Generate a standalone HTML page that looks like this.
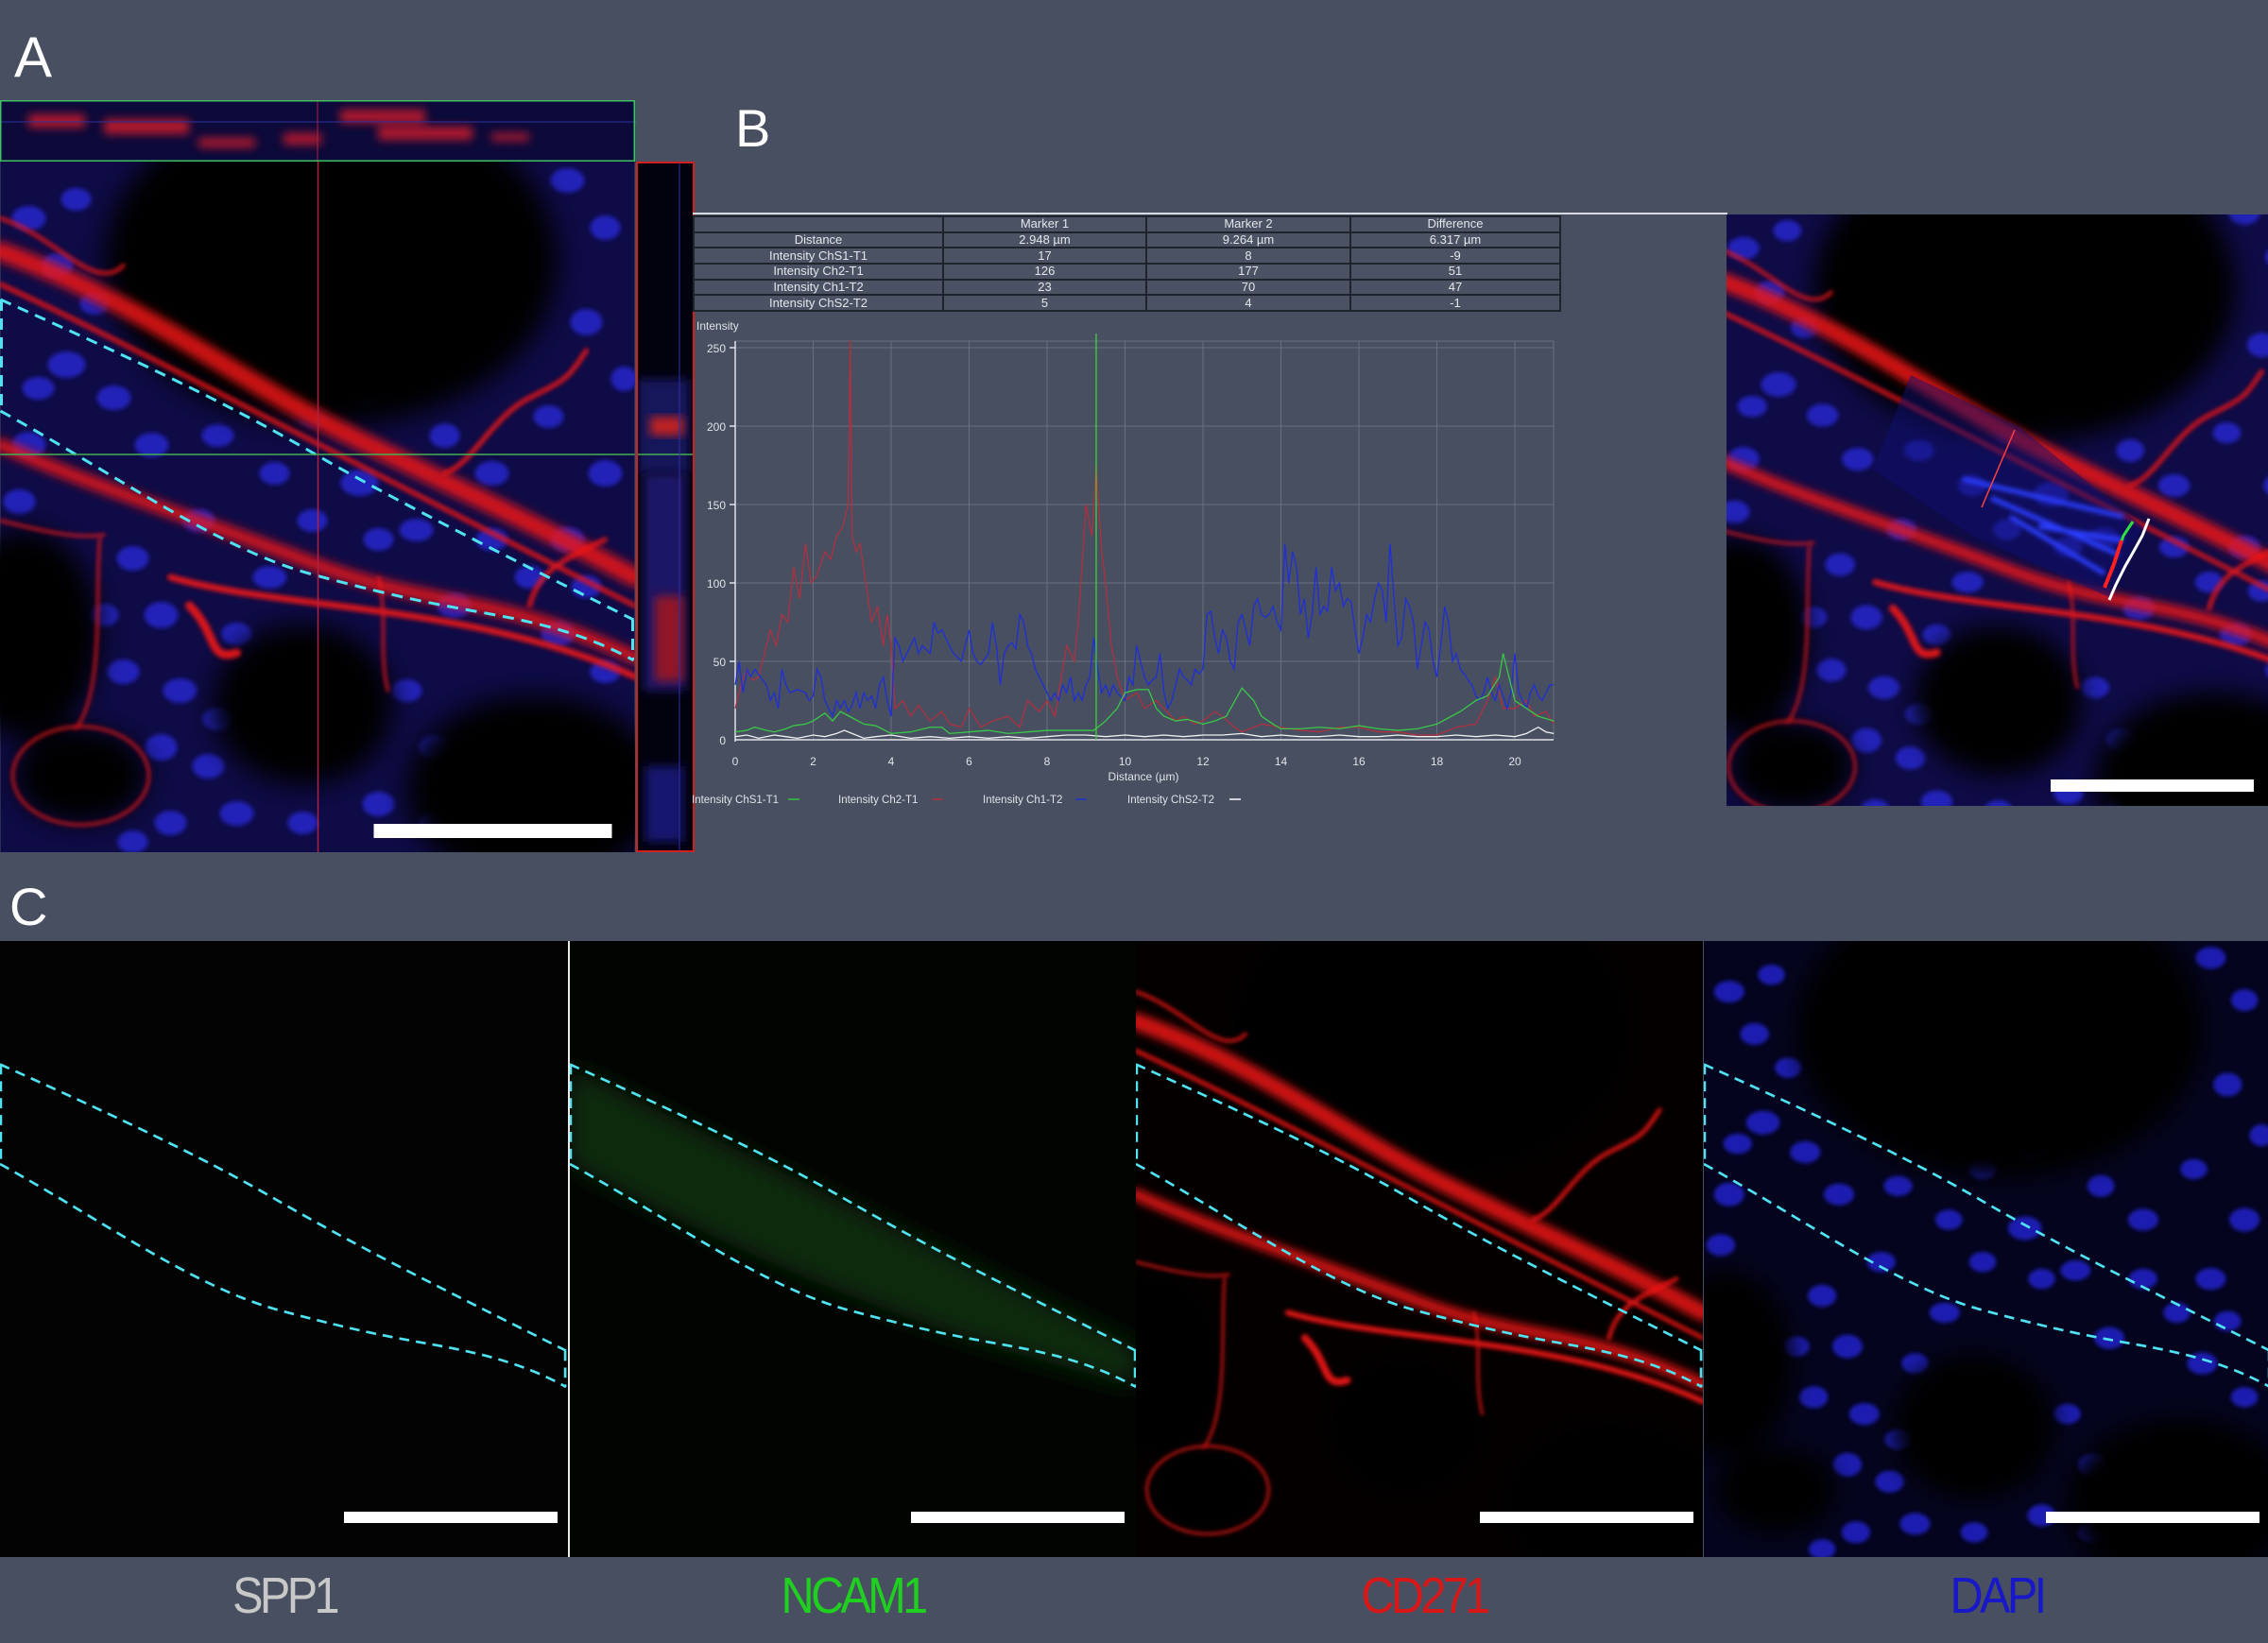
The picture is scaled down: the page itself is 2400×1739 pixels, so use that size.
<!DOCTYPE html>
<html><head><meta charset="utf-8"><style>
html,body{margin:0;padding:0}
body{width:2400px;height:1739px;background:#474f60;position:relative;overflow:hidden;font-family:"Liberation Sans",sans-serif}
.abs{position:absolute}
.lbl{position:absolute;color:#fff;font-size:60px;line-height:1}
.bl{position:absolute;top:1662px;font-size:54px;letter-spacing:-4px;transform:scaleX(0.9);line-height:1}
table{border-collapse:collapse;table-layout:fixed;position:absolute;left:733px;top:228px;width:917px;font-size:13px;color:#e4e6ea}
td{border:2px solid #1f232c;height:14.7px;padding:0;text-align:center;background:#4a5264;line-height:14px;white-space:nowrap}
</style></head><body>
<svg width="0" height="0" style="position:absolute">
<defs>
<filter id="b2" x="-20%" y="-20%" width="140%" height="140%"><feGaussianBlur stdDeviation="2.5"/></filter>
<filter id="b4" x="-20%" y="-20%" width="140%" height="140%"><feGaussianBlur stdDeviation="5"/></filter>
<filter id="b10" x="-30%" y="-30%" width="160%" height="160%"><feGaussianBlur stdDeviation="14"/></filter>
<g id="nuc" filter="url(#b2)">
<ellipse cx="30" cy="60" rx="18" ry="13"/><ellipse cx="80" cy="40" rx="16" ry="12"/><ellipse cx="60" cy="110" rx="17" ry="13"/><ellipse cx="100" cy="150" rx="16" ry="12"/>
<ellipse cx="70" cy="215" rx="20" ry="14"/><ellipse cx="120" cy="250" rx="18" ry="13"/><ellipse cx="30" cy="300" rx="18" ry="14"/><ellipse cx="20" cy="360" rx="17" ry="13"/>
<ellipse cx="230" cy="290" rx="17" ry="12"/><ellipse cx="290" cy="330" rx="16" ry="12"/><ellipse cx="380" cy="340" rx="20" ry="14"/><ellipse cx="440" cy="390" rx="18" ry="12"/>
<ellipse cx="385" cy="245" rx="18" ry="13"/><ellipse cx="470" cy="290" rx="16" ry="13"/><ellipse cx="520" cy="330" rx="18" ry="13"/><ellipse cx="580" cy="270" rx="16" ry="12"/>
<ellipse cx="620" cy="170" rx="17" ry="14"/><ellipse cx="640" cy="70" rx="16" ry="13"/><ellipse cx="600" cy="20" rx="18" ry="13"/><ellipse cx="640" cy="330" rx="18" ry="14"/>
<ellipse cx="600" cy="400" rx="18" ry="13"/><ellipse cx="560" cy="440" rx="16" ry="12"/><ellipse cx="480" cy="470" rx="18" ry="13"/><ellipse cx="140" cy="420" rx="17" ry="13"/>
<ellipse cx="170" cy="480" rx="18" ry="14"/><ellipse cx="130" cy="540" rx="17" ry="13"/><ellipse cx="190" cy="560" rx="18" ry="13"/><ellipse cx="170" cy="620" rx="17" ry="14"/>
<ellipse cx="180" cy="700" rx="17" ry="13"/><ellipse cx="250" cy="690" rx="18" ry="13"/><ellipse cx="320" cy="700" rx="16" ry="12"/><ellipse cx="400" cy="680" rx="17" ry="13"/>
<ellipse cx="430" cy="560" rx="16" ry="12"/><ellipse cx="460" cy="620" rx="17" ry="13"/><ellipse cx="250" cy="500" rx="16" ry="12"/><ellipse cx="285" cy="440" rx="18" ry="12"/>
<ellipse cx="640" cy="540" rx="16" ry="12"/><ellipse cx="590" cy="500" rx="18" ry="13"/><ellipse cx="330" cy="380" rx="16" ry="12"/><ellipse cx="210" cy="380" rx="17" ry="12"/>
<ellipse cx="40" cy="240" rx="17" ry="12"/><ellipse cx="160" cy="300" rx="18" ry="13"/><ellipse cx="330" cy="270" rx="16" ry="12"/><ellipse cx="520" cy="400" rx="17" ry="12"/>
<ellipse cx="220" cy="640" rx="17" ry="13"/><ellipse cx="140" cy="720" rx="16" ry="12"/><ellipse cx="460" cy="700" rx="17" ry="12"/><ellipse cx="660" cy="230" rx="14" ry="13"/>
<ellipse cx="620" cy="450" rx="16" ry="12"/><ellipse cx="230" cy="590" rx="16" ry="12"/><ellipse cx="110" cy="480" rx="15" ry="12"/><ellipse cx="400" cy="400" rx="16" ry="12"/>
</g>
<g id="holes" fill="#000" filter="url(#b10)">
<ellipse cx="350" cy="105" rx="240" ry="175"/>
<ellipse cx="25" cy="500" rx="80" ry="110"/>
<ellipse cx="85" cy="650" rx="70" ry="50"/>
<ellipse cx="320" cy="575" rx="95" ry="85"/>
<ellipse cx="565" cy="665" rx="135" ry="100"/>
</g>
<g id="red" fill="none" stroke="#f01818" stroke-linecap="round">
<g filter="url(#b4)" opacity=".85">
<path d="M0,95 C150,150 250,230 360,285 S560,380 671,440" stroke-width="20"/>
<path d="M0,300 C100,345 200,375 330,425 S520,455 671,525" stroke-width="14"/>
</g>
<g filter="url(#b2)" opacity=".9">
<path d="M0,130 C120,185 300,282 671,470" stroke-width="5"/>
<path d="M180,440 C300,475 500,468 671,545" stroke-width="7"/>
<path d="M0,60 C60,80 100,140 130,110" stroke-width="4"/>
<ellipse cx="85" cy="650" rx="72" ry="52" stroke-width="3"/>
<path d="M105,400 C100,460 110,560 80,600" stroke-width="3"/>
<path d="M200,470 C230,500 220,530 250,520" stroke-width="9"/>
<path d="M470,330 C500,320 520,270 560,250 S600,230 620,200" stroke-width="5"/>
<path d="M0,380 C40,390 80,400 110,395" stroke-width="3"/>
<path d="M560,470 C570,430 600,420 640,400" stroke-width="5"/>
<path d="M400,440 C410,480 400,520 410,560" stroke-width="3"/>
</g>
</g>
<g id="cyan" fill="none" stroke="#4fe3f2" stroke-width="3" stroke-dasharray="12 8">
<path d="M0,146 C120,200 230,250 330,308 S560,430 670,485"/>
<path d="M0,264 C120,330 230,410 330,437 S470,470 519,479 S620,500 670,528"/>
<path d="M1,146 L1,264 M669,485 L669,528"/>
</g>
</defs>
</svg>

<div class="lbl" style="left:15px;top:31px">A</div>
<div class="lbl" style="left:778px;top:108px;font-size:56px">B</div>
<div class="lbl" style="left:10px;top:932px;font-size:56px">C</div>

<svg class="abs" style="left:0;top:106px" width="673" height="66">
<rect width="673" height="66" fill="#0b0a3a"/>
<g fill="#e01a2a" filter="url(#b4)" opacity=".8">
<rect x="30" y="15" width="60" height="14"/><rect x="110" y="20" width="90" height="16"/><rect x="210" y="40" width="60" height="10"/>
<rect x="360" y="10" width="90" height="14"/><rect x="400" y="28" width="100" height="14"/><rect x="520" y="35" width="40" height="8"/><rect x="300" y="35" width="40" height="12"/>
</g>
<rect x="0" y="22" width="673" height="2" fill="#3030a0" opacity=".5"/>
<line x1="336" y1="0" x2="336" y2="66" stroke="#b02040" stroke-width="1"/>
<rect x="0.5" y="0.5" width="671" height="64" fill="none" stroke="#40c060" stroke-width="2"/>
</svg>
<svg class="abs" style="left:0;top:171px" width="672" height="731" viewBox="0 0 671 731">
<rect width="671" height="731" fill="#0e0b46"/>
<use href="#nuc" fill="#2222b8"/>
<use href="#holes"/>
<use href="#red"/>
<use href="#cyan"/>
<line x1="336" y1="0" x2="336" y2="731" stroke="#b02040" stroke-width="1.5"/>
<line x1="0" y1="310" x2="671" y2="310" stroke="#40b050" stroke-width="1.5"/>
<rect x="395" y="701" width="252" height="15" fill="#fff"/>
</svg>
<svg class="abs" style="left:673px;top:171px" width="62" height="731">
<rect width="62" height="731" fill="#02020e"/>
<rect x="2" y="230" width="55" height="100" fill="#14145a" filter="url(#b4)"/>
<rect x="8" y="330" width="45" height="230" fill="#1a1866" filter="url(#b4)"/>
<rect x="15" y="270" width="35" height="20" fill="#c02020" filter="url(#b4)"/>
<rect x="20" y="460" width="30" height="90" fill="#901828" filter="url(#b4)"/>
<rect x="10" y="640" width="40" height="80" fill="#161670" filter="url(#b4)"/>
<line x1="0" y1="310" x2="62" y2="310" stroke="#40b050" stroke-width="1.5"/>
<line x1="46" y1="0" x2="46" y2="731" stroke="#3030a0" stroke-width="1"/>
<rect x="1" y="1" width="60" height="729" fill="none" stroke="#d02020" stroke-width="2"/>
</svg>

<div class="abs" style="left:733px;top:225px;width:1095px;height:2px;background:#d8dbe2"></div>
<table>
<colgroup><col style="width:264px"><col style="width:215px"><col style="width:216px"><col style="width:222px"></colgroup>
<tr><td></td><td>Marker 1</td><td>Marker 2</td><td>Difference</td></tr>
<tr><td>Distance</td><td>2.948 µm</td><td>9.264 µm</td><td>6.317 µm</td></tr>
<tr><td>Intensity ChS1-T1</td><td>17</td><td>8</td><td>-9</td></tr>
<tr><td>Intensity Ch2-T1</td><td>126</td><td>177</td><td>51</td></tr>
<tr><td>Intensity Ch1-T2</td><td>23</td><td>70</td><td>47</td></tr>
<tr><td>Intensity ChS2-T2</td><td>5</td><td>4</td><td>-1</td></tr>
</table>

<svg class="abs" style="left:730px;top:330px" width="930" height="540" font-family="Liberation Sans, sans-serif" font-size="12" fill="#e0e2e8">
<text x="7" y="19">Intensity</text>
<g stroke="#68707f" stroke-width="1">
<line x1="48" y1="31" x2="914" y2="31"/>
<line x1="48" y1="38" x2="914" y2="38"/><line x1="48" y1="121" x2="914" y2="121"/><line x1="48" y1="204" x2="914" y2="204"/>
<line x1="48" y1="287" x2="914" y2="287"/><line x1="48" y1="370" x2="914" y2="370"/>
<line x1="130.5" y1="31" x2="130.5" y2="453"/><line x1="213" y1="31" x2="213" y2="453"/><line x1="295.5" y1="31" x2="295.5" y2="453"/>
<line x1="378" y1="31" x2="378" y2="453"/><line x1="460.5" y1="31" x2="460.5" y2="453"/><line x1="543" y1="31" x2="543" y2="453"/>
<line x1="625.5" y1="31" x2="625.5" y2="453"/><line x1="708" y1="31" x2="708" y2="453"/><line x1="790.5" y1="31" x2="790.5" y2="453"/>
<line x1="873" y1="31" x2="873" y2="453"/><line x1="914" y1="31" x2="914" y2="453"/>
</g>
<g stroke="#e0e2e8" stroke-width="1.5"><line x1="48" y1="31" x2="48" y2="455"/><line x1="48" y1="453" x2="914" y2="453"/>
<line x1="42" y1="38" x2="48" y2="38"/><line x1="42" y1="121" x2="48" y2="121"/><line x1="42" y1="204" x2="48" y2="204"/><line x1="42" y1="287" x2="48" y2="287"/><line x1="42" y1="370" x2="48" y2="370"/></g>
<g text-anchor="end"><text x="38" y="43">250</text><text x="38" y="126">200</text><text x="38" y="209">150</text><text x="38" y="292">100</text><text x="38" y="375">50</text><text x="38" y="458">0</text></g>
<g text-anchor="middle"><text x="48" y="480">0</text><text x="130.5" y="480">2</text><text x="213" y="480">4</text><text x="295.5" y="480">6</text><text x="378" y="480">8</text><text x="460.5" y="480">10</text><text x="543" y="480">12</text><text x="625.5" y="480">14</text><text x="708" y="480">16</text><text x="790.5" y="480">18</text><text x="873" y="480">20</text>
<text x="480" y="496">Distance (µm)</text></g>
<g font-size="11.5"><text x="2" y="520">Intensity ChS1-T1</text><text x="157" y="520">Intensity Ch2-T1</text><text x="310" y="520">Intensity Ch1-T2</text><text x="463" y="520">Intensity ChS2-T2</text></g>
<line x1="104" y1="516" x2="116" y2="516" stroke="#30c040" stroke-width="1.5"/>
<line x1="256" y1="516" x2="268" y2="516" stroke="#b03040" stroke-width="1.5"/>
<line x1="408" y1="516" x2="420" y2="516" stroke="#2030d0" stroke-width="1.5"/>
<line x1="571" y1="516" x2="583" y2="516" stroke="#fff" stroke-width="1.5"/>
<g transform="translate(48,453) scale(41.25,-1.66)" fill="none" stroke-width="1.3">
<polyline vector-effect="non-scaling-stroke" stroke="#b03040" points="0,20 0.15,35 0.3,45 0.45,38 0.6,40 0.75,55 0.9,70 1.05,60 1.2,80 1.35,75 1.5,110 1.65,90 1.8,125 1.95,100 2.1,105 2.3,120 2.45,115 2.6,130 2.75,135 2.9,150 2.95,255 3,130 3.1,120 3.2,125 3.35,100 3.5,75 3.65,85 3.8,60 3.9,80 4,60 4.1,20 4.3,25 4.5,15 4.7,22 5,12 5.3,18 5.5,10 5.8,8 6,20 6.3,8 6.6,12 7,15 7.3,8 7.5,25 7.8,18 8,25 8.2,15 8.5,60 8.7,50 8.8,75 9,150 9.15,130 9.26,175 9.4,120 9.5,100 9.65,60 9.8,40 10,25 10.3,30 10.5,20 10.8,25 11,20 11.3,12 11.5,15 11.8,10 12,12 12.3,18 12.5,15 12.8,8 13,5 13.5,10 14,8 14.5,6 15,5 15.5,8 16,8 16.5,5 17,5 17.5,3 18,3 18.5,8 19,10 19.3,25 19.5,40 19.7,20 20,20 20.3,25 20.5,15 20.8,18 21,10"/>
<polyline vector-effect="non-scaling-stroke" stroke="#1f2fd8" points="0,35 0.1,50 0.2,30 0.3,45 0.4,40 0.5,45 0.65,40 0.8,35 0.9,25 1,30 1.1,20 1.2,45 1.3,35 1.4,30 1.6,32 1.8,30 1.9,25 2,28 2.1,45 2.2,40 2.3,25 2.4,20 2.5,15 2.6,25 2.7,20 2.8,25 2.9,18 3,22 3.1,30 3.2,20 3.3,30 3.4,25 3.5,28 3.6,20 3.7,35 3.8,40 3.9,25 4,15 4.1,65 4.2,60 4.3,50 4.4,55 4.6,65 4.7,55 4.8,60 5,55 5.1,75 5.2,68 5.3,70 5.5,60 5.6,55 5.8,50 5.9,60 6,70 6.1,55 6.2,50 6.3,48 6.5,55 6.6,75 6.7,60 6.8,35 6.9,55 7,60 7.1,62 7.2,58 7.3,80 7.4,75 7.5,60 7.6,55 7.7,45 7.8,40 7.9,35 8,30 8.1,25 8.2,30 8.3,25 8.4,35 8.5,30 8.6,40 8.7,25 8.8,30 8.9,25 9,35 9.1,40 9.2,65 9.3,45 9.4,30 9.5,35 9.6,28 9.7,35 9.8,30 10,25 10.1,40 10.2,35 10.3,60 10.4,50 10.5,40 10.6,35 10.7,38 10.8,40 10.9,55 11,30 11.1,20 11.2,25 11.4,45 11.5,40 11.6,38 11.7,35 11.8,45 11.9,42 12,45 12.1,80 12.2,82 12.3,65 12.4,55 12.5,70 12.6,65 12.7,50 12.8,45 12.9,75 13,80 13.1,70 13.2,60 13.3,85 13.4,90 13.5,80 13.6,78 13.7,80 13.8,85 13.9,75 14,70 14.1,125 14.2,100 14.3,120 14.4,110 14.5,80 14.6,90 14.7,65 14.8,80 14.9,110 15,80 15.1,85 15.2,82 15.3,110 15.4,95 15.5,100 15.6,85 15.7,90 15.8,88 15.9,70 16,55 16.1,65 16.2,80 16.3,75 16.4,90 16.5,100 16.6,95 16.7,75 16.8,125 16.9,90 17,60 17.1,65 17.2,90 17.3,85 17.4,75 17.5,45 17.6,60 17.7,75 17.8,70 17.9,50 18,40 18.1,60 18.2,85 18.3,75 18.4,50 18.5,55 18.6,45 18.7,42 18.8,38 18.9,35 19,28 19.1,25 19.2,30 19.3,40 19.4,30 19.5,25 19.6,35 19.7,28 19.8,20 19.9,30 20,55 20.1,30 20.2,25 20.3,20 20.4,30 20.5,35 20.6,28 20.7,25 20.8,30 20.9,35 21,35"/>
<polyline vector-effect="non-scaling-stroke" stroke="#3ac848" points="0,5 0.3,6 0.5,8 0.8,6 1,5 1.3,7 1.5,9 1.8,10 2,12 2.3,17 2.5,12 2.7,18 3,14 3.3,10 3.6,9 4,4 4.5,5 5,8 5.3,8 5.5,4 6,5 6.5,6 7,4 7.5,5 8,6 8.5,6 9.2,6 9.5,12 9.8,20 10,30 10.3,32 10.6,32 10.8,20 11,15 11.3,12 11.6,13 12,10 12.3,12 12.6,15 13,33 13.3,25 13.5,15 13.8,10 14,7 14.5,7 15,8 15.5,7 16,9 16.5,7 17,6 17.5,7 18,10 18.3,14 18.6,18 19,25 19.3,28 19.6,40 19.7,55 19.9,35 20,25 20.3,20 20.6,15 21,12"/>
<polyline vector-effect="non-scaling-stroke" stroke="#f0f0f0" points="0,2 0.3,3 0.6,1 1,3 1.3,2 1.6,1 2,3 2.3,2 2.6,4 2.8,6 3,4 3.3,1 3.6,2 4,3 4.5,1 5,2 5.5,1 6,2 6.5,1 7,2 7.5,1 8,2 8.5,3 9,3 9.5,2 10,3 10.5,2 11,3 11.5,2 12,3 12.5,3 13,4 13.5,2 14,3 14.5,2 15,2 15.5,3 16,2 16.5,2 17,3 17.5,2 18,2 18.5,3 19,2 19.5,3 20,2 20.3,4 20.6,8 20.8,5 21,4"/>
<line vector-effect="non-scaling-stroke" x1="9.26" y1="0" x2="9.26" y2="259" stroke="#40d040" stroke-width="1.3"/>
</g>
</svg>

<svg class="abs" style="left:1827px;top:227px" width="573" height="626" viewBox="0 0 573 626">
<rect width="573" height="626" fill="#0e0b46"/>
<g transform="translate(-10,-20) scale(0.93)">
<use href="#nuc" fill="#2222b8"/>
<use href="#holes"/>
<use href="#red"/>
</g>
<polygon points="195,170 310,225 440,330 405,405 260,340 155,270" fill="#101070" opacity=".5"/>
<g stroke="#2a3cff" stroke-width="5" filter="url(#b2)">
<line x1="250" y1="280" x2="420" y2="320"/><line x1="280" y1="300" x2="415" y2="360"/><line x1="300" y1="320" x2="400" y2="380"/><line x1="330" y1="330" x2="420" y2="345"/>
</g>
<line x1="305" y1="228" x2="270" y2="310" stroke="#ff4040" stroke-width="1.5"/>
<polyline points="447,322 440,340 430,358 422,372 412,392 405,408" fill="none" stroke="#fff" stroke-width="3"/>
<polyline points="430,325 420,340 415,355" fill="none" stroke="#30e040" stroke-width="3"/>
<polyline points="418,345 410,370 400,395" fill="none" stroke="#ff2020" stroke-width="4"/>
<rect x="343" y="598" width="215" height="13" fill="#fff"/>
</svg>

<svg class="abs" style="left:0;top:996px" width="601" height="652" viewBox="0 0 601 652">
<rect width="601" height="652" fill="#030303"/>
<g transform="scale(0.894)"><use href="#cyan"/></g>
<rect x="364" y="604" width="226" height="12" fill="#fff"/>
</svg>
<div class="abs" style="left:601px;top:996px;width:2px;height:652px;background:#e8e8e8"></div>
<svg class="abs" style="left:603px;top:996px" width="599" height="652" viewBox="0 0 599 652">
<rect width="599" height="652" fill="#020402"/>
<g transform="scale(0.894)">
<path d="M0,150 C150,220 300,300 671,480 L671,528 C500,480 330,440 0,264 Z" fill="#0b2a0d" filter="url(#b10)"/>
<use href="#cyan"/></g>
<rect x="361" y="604" width="226" height="12" fill="#fff"/>
</svg>
<svg class="abs" style="left:1202px;top:996px" width="600" height="652" viewBox="0 0 600 652">
<rect width="600" height="652" fill="#050000"/>
<g transform="scale(0.894)"><use href="#holes"/><use href="#red"/><use href="#cyan"/></g>
<rect x="364" y="604" width="226" height="12" fill="#fff"/>
</svg>
<svg class="abs" style="left:1803px;top:996px" width="597" height="652" viewBox="0 0 597 652">
<rect width="597" height="652" fill="#04041e"/>
<g transform="scale(0.894)"><use href="#nuc" fill="#1a1ab0"/><use href="#holes"/><use href="#cyan"/></g>
<rect x="362" y="604" width="226" height="12" fill="#fff"/>
</svg>

<div class="bl" style="left:240px;color:#c8c8c8">SPP1</div>
<div class="bl" style="left:818px;color:#20d020">NCAM1</div>
<div class="bl" style="left:1433px;color:#d81818">CD271</div>
<div class="bl" style="left:2058px;color:#1818c8">DAPI</div>
</body></html>
